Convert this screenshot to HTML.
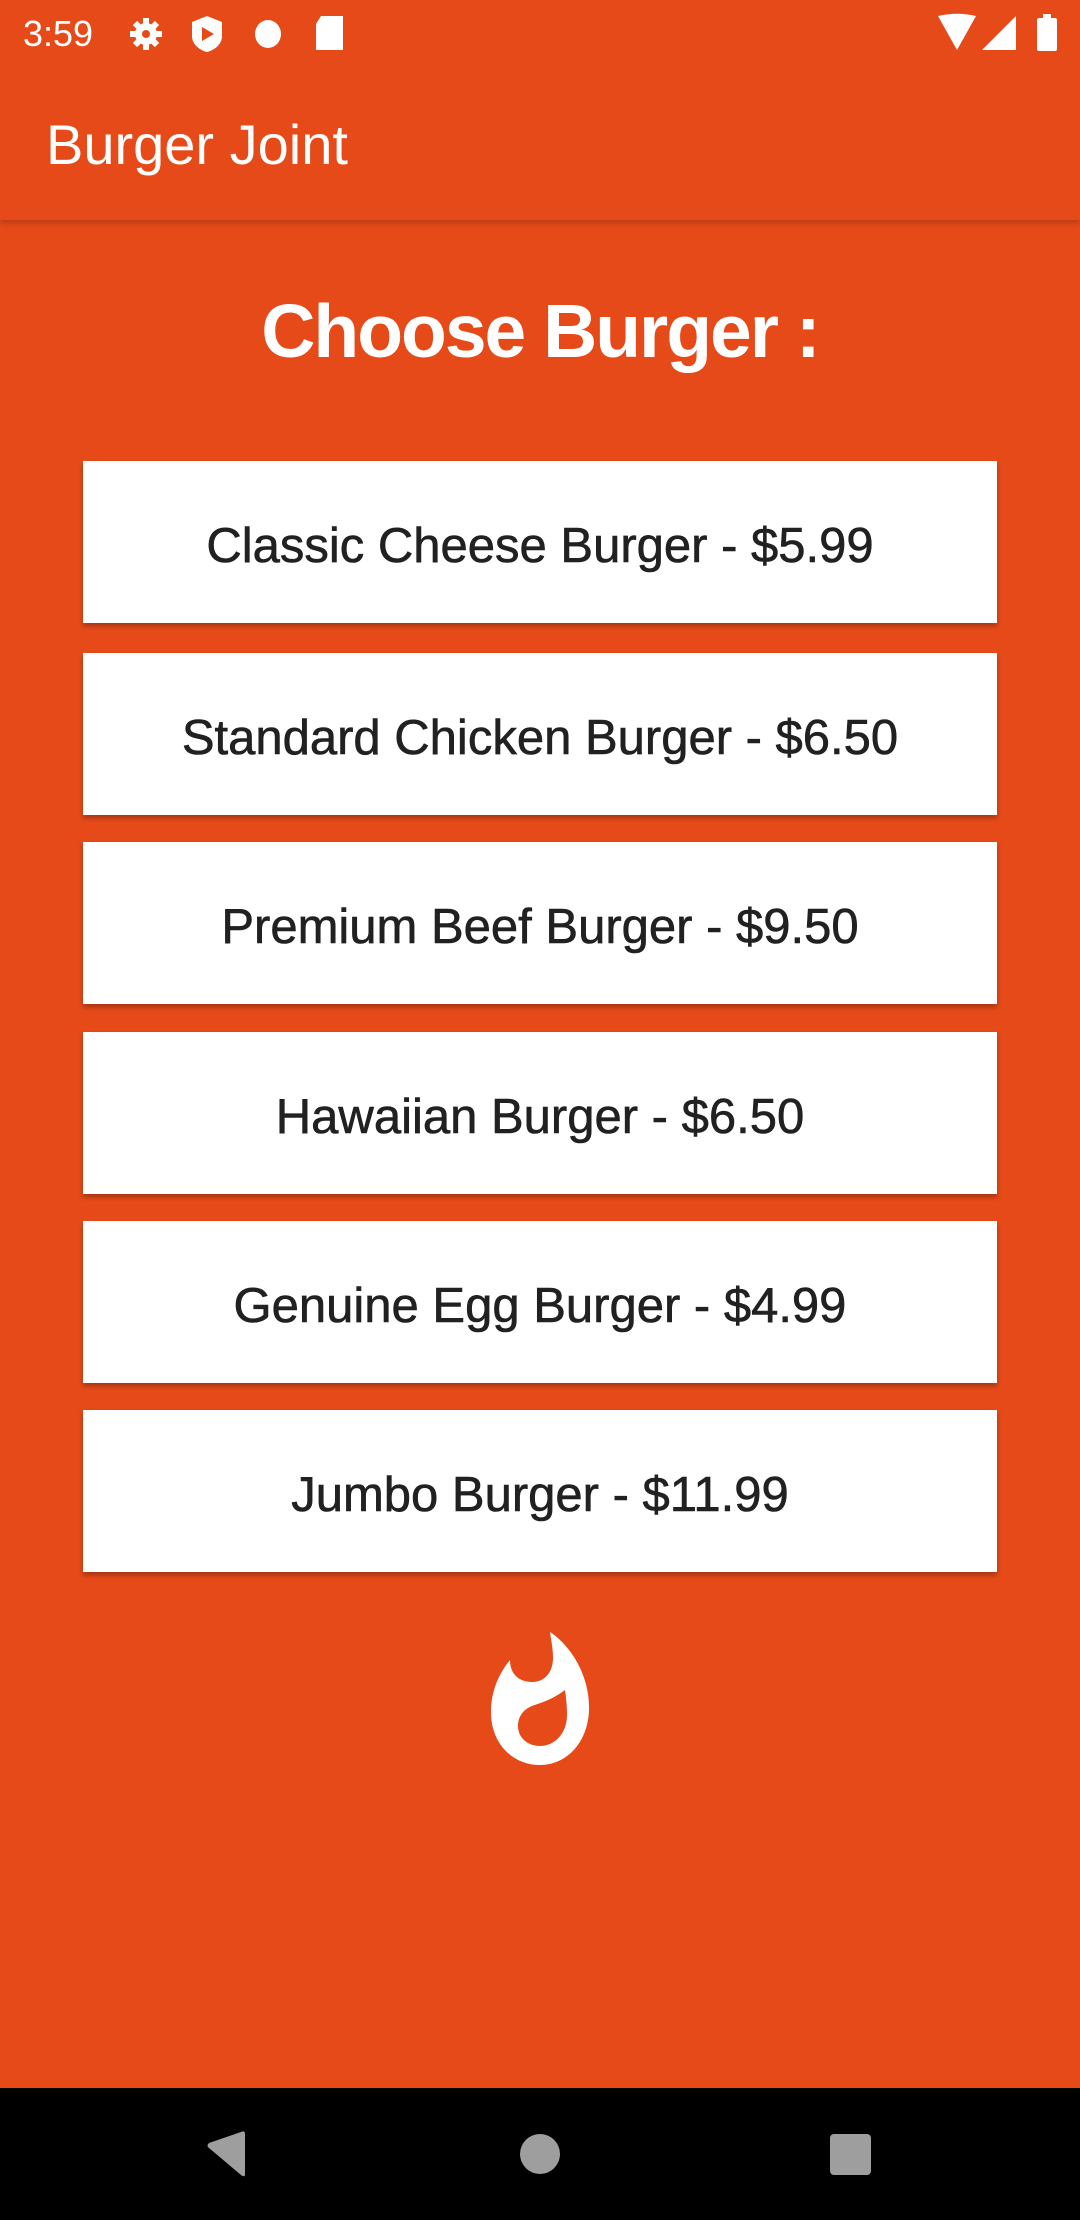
<!DOCTYPE html>
<html><head><meta charset="utf-8"><style>
html,body{margin:0;padding:0;overflow:hidden;width:1080px;height:2220px}
body{position:relative;background:#E64A19;font-family:"Liberation Sans",sans-serif}
.appbar{position:absolute;left:0;top:0;width:1080px;height:220px;background:#E64A19;box-shadow:0 3px 6px rgba(0,0,0,0.2)}
.title{position:absolute;left:46px;top:113px;font-size:56px;color:#fff;line-height:64px}
.time{position:absolute;left:23px;top:12px;font-size:36px;color:#fff;line-height:44px}
.h{position:absolute;left:0;width:1080px;top:286px;text-align:center;color:#fff;font-weight:bold;font-size:75px;letter-spacing:-2px;line-height:90px}
.btn{position:absolute;left:83px;width:914px;height:162px;box-sizing:border-box;padding-top:8px;background:#fff;box-shadow:0 3px 5px rgba(0,0,0,0.3);display:flex;align-items:center;justify-content:center;font-size:49px;color:#212121;-webkit-text-stroke:0.6px #212121}
.nav{position:absolute;left:0;top:2088px;width:1080px;height:132px;background:#000}
</style></head><body>
<div class="appbar">
<div class="time">3:59</div>
<svg style="position:absolute;left:0;top:0" width="1080" height="63">
<g fill="#fff">
<circle cx="146" cy="34" r="11"/>
<g stroke="#fff" stroke-width="6"><line x1="146" y1="18" x2="146" y2="50"/><line x1="130" y1="34" x2="162" y2="34"/><line x1="135" y1="23" x2="157" y2="45"/><line x1="157" y1="23" x2="135" y2="45"/></g>
<circle cx="146" cy="34" r="4" fill="#E64A19"/>
<path d="M207 16 L222 22 L222 36 C222 44 215 50 207 52 C199 50 192 44 192 36 L192 22 Z"/>
<path d="M202 27 L214 34 L202 41 Z" fill="#E64A19"/>
<ellipse cx="268" cy="34" rx="13" ry="14"/>
<path d="M321 16 L343 16 L343 50 L316 50 L316 24 Z"/>
<path d="M947 16 C960 13 972 13 985 16 L966 50 Z" transform="translate(-9,0)"/>
<path d="M1016 16 L1016 50 L982 50 Z"/>
<rect x="1037" y="18" width="20" height="33" rx="2"/><rect x="1043" y="14" width="8" height="5"/>
</g></svg>
<div class="title">Burger Joint</div>
</div>
<div class="h">Choose Burger :</div>
<div class="btn" style="top:461px">Classic Cheese Burger - $5.99</div>
<div class="btn" style="top:653px">Standard Chicken Burger - $6.50</div>
<div class="btn" style="top:842px">Premium Beef Burger - $9.50</div>
<div class="btn" style="top:1032px">Hawaiian Burger - $6.50</div>
<div class="btn" style="top:1221px">Genuine Egg Burger - $4.99</div>
<div class="btn" style="top:1410px">Jumbo Burger - $11.99</div>
<svg style="position:absolute;left:440px;top:1600px" width="200" height="200">
<path fill="#fff" fill-rule="evenodd" d="M110,32 C130,45 150,75 149,110 C148,142 127,165 100,165 C72,165 51,143 51,112 C51,90 60,72 70,60 C70,75 80,82 92,82 C105,82 113,72 113,58 C113,48 111,40 110,32 Z M125,90 C112,100 100,103 92,106 C82,110 78,118 78,126 C78,138 88,146 100,146 C115,146 127,133 127,115 C127,105 126,97 125,90 Z"/>
</svg>
<div class="nav">
<svg width="1080" height="132"><g fill="#9e9e9e">
<path d="M245 46 L245 86 Q245 90 241 87 L209 60 Q206 58 209 55 L241 44 Q245 42 245 46 Z"/>
<circle cx="540" cy="66" r="20"/>
<rect x="830" y="46" width="41" height="41" rx="4"/>
</g></svg>
</div>
</body></html>
